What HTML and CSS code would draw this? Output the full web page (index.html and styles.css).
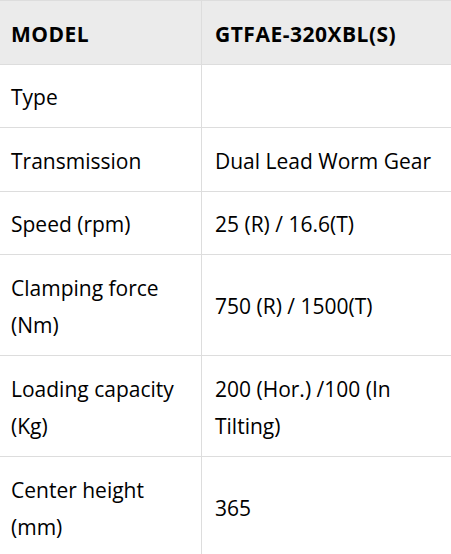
FILE: index.html
```html
<!DOCTYPE html>
<html>
<head>
<meta charset="utf-8">
<link rel="stylesheet" href="styles.css">
</head>
<body>
<table class="spec">
  <thead>
    <tr><th class="c1">MODEL</th><th class="c2">GTFAE-320XBL(S)</th></tr>
  </thead>
  <tbody>
    <tr><td class="c1">Type</td><td class="c2"></td></tr>
    <tr><td class="c1">Transmission</td><td class="c2">Dual Lead Worm Gear</td></tr>
    <tr><td class="c1">Speed (rpm)</td><td class="c2">25 (R) / 16.6(T)</td></tr>
    <tr><td class="c1">Clamping force (Nm)</td><td class="c2">750 (R) / 1500(T)</td></tr>
    <tr><td class="c1">Loading capacity (Kg)</td><td class="c2">200 (Hor.) /100 (In Tilting)</td></tr>
    <tr><td class="c1">Center height (mm)</td><td class="c2">365</td></tr>
  </tbody>
</table>
</body>
</html>
```
FILE: styles.css
```css
html, body {
  margin: 0;
  padding: 0;
  background: #fff;
}
.spec {
  border-collapse: collapse;
  width: 456px;
  margin-left: -3px;
  font-family: "Open Sans", "Noto Sans", sans-serif;
  font-size: 21px;
  line-height: 37.5px;
  color: #000;
}
.spec th, .spec td {
  border: 1px solid #dddddd;
  padding: 14.5px 13px 10.5px;
  text-align: left;
  vertical-align: middle;
}
.spec th {
  background: #ebebeb;
  font-weight: 700;
  letter-spacing: 0.5px;
}
.spec .c1 {
  width: 177px;
}
```
